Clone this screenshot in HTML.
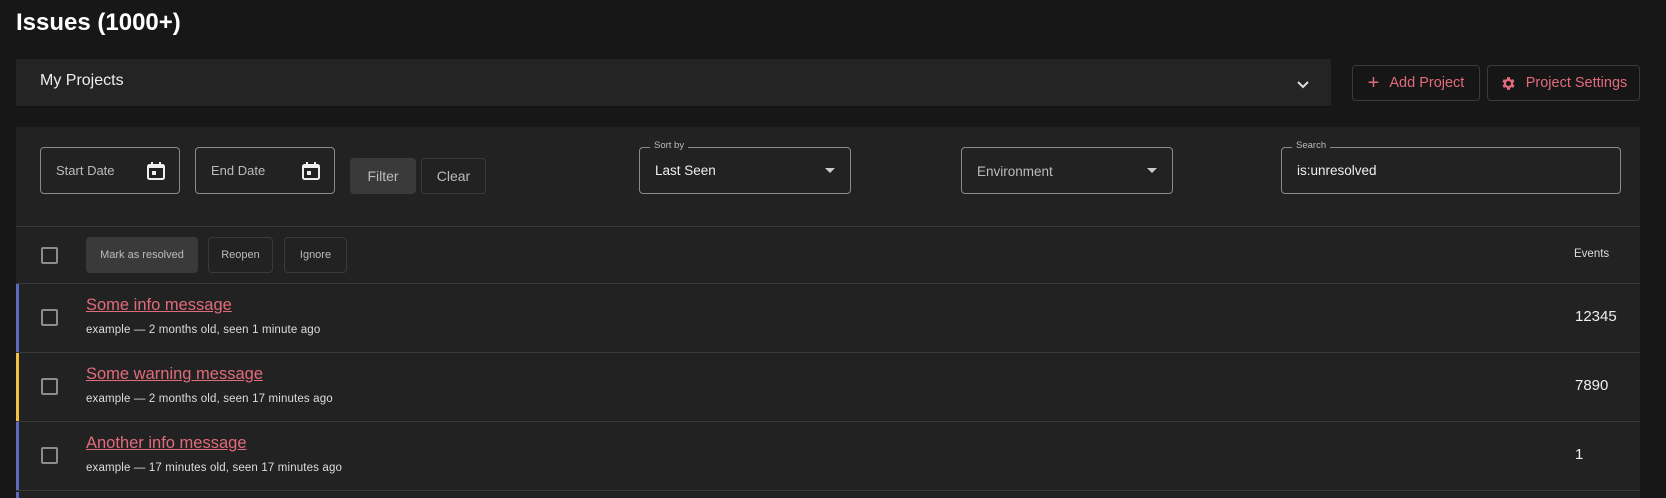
<!DOCTYPE html>
<html style="width:1666px;height:498px;overflow:hidden"><head><meta charset="utf-8"><style>
*{box-sizing:border-box;margin:0;padding:0}
body{width:1666px;height:498px;background:#171717;font-family:"Liberation Sans",sans-serif;color:#e8e8e8;position:relative;overflow:hidden}
.a{position:absolute}
.fld{position:absolute;border:1px solid #8a8a8a;border-radius:4px}
.btn{position:absolute;border:1px solid #3a3a3a;border-radius:4px;display:flex;align-items:center;justify-content:center;color:#bbb}
.lbl{position:absolute;top:-8px;left:10px;background:#222;padding:0 4px;font-size:9.5px;color:#bbb}
.cb{position:absolute;left:41px;width:17px;height:17px;border:2px solid #8c8c8c;border-radius:2px}
.row{position:absolute;left:16px;width:1624px;height:69px;border-bottom:1px solid #3a3a3a;background:#222}
.bar{position:absolute;left:0;top:0;width:3px;height:100%}
.t{position:absolute;left:70px;top:12px;font-size:16.5px;color:#e06b7b;text-decoration:underline}
.s{position:absolute;left:70px;top:40px;font-size:11.5px;color:#ddd;letter-spacing:0.15px}
.n{position:absolute;left:1559px;top:24px;font-size:15px;color:#eee}
</style></head><body>
<div class="a" style="left:16px;top:9px;font-size:24px;font-weight:bold;color:#fff">Issues (1000+)</div>
<div class="a" style="left:16px;top:59px;width:1315px;height:48px;background:#242424;border-bottom:1px solid #111"></div>
<div class="a" style="left:40px;top:72px;font-size:16px;color:#eee">My Projects</div>
<svg class="a" style="left:1296px;top:80px" width="14" height="10" viewBox="0 0 14 10"><path d="M2 2l5 5 5-5" stroke="#ddd" stroke-width="2" fill="none"/></svg>
<div class="btn" style="left:1352px;top:65px;width:128px;height:36px;color:#e06b7b;font-size:14.5px;background:#161616"><span style="font-size:20px;margin-right:10px;font-weight:300">+</span>Add Project</div>
<div class="btn" style="left:1487px;top:65px;width:153px;height:36px;color:#e06b7b;font-size:14.5px;background:#161616"><svg width="17" height="17" viewBox="0 0 24 24" style="margin-right:9px"><path fill="#e06b7b" d="M19.4 13a7.5 7.5 0 0 0 0-2l2.1-1.6-2-3.5-2.5 1a7 7 0 0 0-1.7-1L15 3h-4l-.4 2.9a7 7 0 0 0-1.7 1l-2.5-1-2 3.5L6.6 11a7.5 7.5 0 0 0 0 2l-2.1 1.6 2 3.5 2.5-1a7 7 0 0 0 1.7 1L11 21h4l.4-2.9a7 7 0 0 0 1.7-1l2.5 1 2-3.5zM13 15.5a3.5 3.5 0 1 1 0-7 3.5 3.5 0 0 1 0 7z" transform="translate(-1 0)"/></svg>Project Settings</div>
<div class="a" style="left:16px;top:127px;width:1624px;height:371px;background:#222"></div>
<div class="fld" style="left:40px;top:147px;width:140px;height:47px"><span class="a" style="left:15px;top:15px;font-size:13px;color:#bbb">Start Date</span><svg class="a" style="left:105px;top:13px" width="20" height="20" viewBox="0 0 20 20"><rect x="2" y="4" width="16" height="14" rx="1.5" fill="none" stroke="#eee" stroke-width="2"/><rect x="2" y="4" width="16" height="3" fill="#eee"/><rect x="5" y="1" width="2" height="4" fill="#eee"/><rect x="13" y="1" width="2" height="4" fill="#eee"/><rect x="6" y="10" width="4" height="4" fill="#eee"/></svg></div>
<div class="fld" style="left:195px;top:147px;width:140px;height:47px"><span class="a" style="left:15px;top:15px;font-size:13px;color:#bbb">End Date</span><svg class="a" style="left:105px;top:13px" width="20" height="20" viewBox="0 0 20 20"><rect x="2" y="4" width="16" height="14" rx="1.5" fill="none" stroke="#eee" stroke-width="2"/><rect x="2" y="4" width="16" height="3" fill="#eee"/><rect x="5" y="1" width="2" height="4" fill="#eee"/><rect x="13" y="1" width="2" height="4" fill="#eee"/><rect x="6" y="10" width="4" height="4" fill="#eee"/></svg></div>
<div class="btn" style="left:350px;top:158px;width:66px;height:36px;background:#3a3a3a;border-color:#3a3a3a;font-size:14px">Filter</div>
<div class="btn" style="left:421px;top:158px;width:65px;height:36px;font-size:14px">Clear</div>
<div class="fld" style="left:639px;top:147px;width:212px;height:47px"><span class="lbl">Sort by</span><span class="a" style="left:15px;top:15px;font-size:13.5px;color:#eee">Last Seen</span><svg class="a" style="left:185px;top:20px" width="10" height="6"><path d="M0 0h10L5 5z" fill="#ccc"/></svg></div>
<div class="fld" style="left:961px;top:147px;width:212px;height:47px"><span class="a" style="left:15px;top:16px;font-size:13.5px;color:#bbb">Environment</span><svg class="a" style="left:185px;top:20px" width="10" height="6"><path d="M0 0h10L5 5z" fill="#ccc"/></svg></div>
<div class="fld" style="left:1281px;top:147px;width:340px;height:47px"><span class="lbl">Search</span><span class="a" style="left:15px;top:15px;font-size:13.5px;color:#eee">is:unresolved</span></div>
<div class="a" style="left:16px;top:226px;width:1624px;height:1px;background:#3a3a3a"></div>
<div class="cb" style="top:247px"></div>
<div class="btn" style="left:86px;top:237px;width:112px;height:36px;background:#3a3a3a;border-color:#3a3a3a;font-size:11px">Mark as resolved</div>
<div class="btn" style="left:208px;top:237px;width:65px;height:36px;font-size:11px">Reopen</div>
<div class="btn" style="left:284px;top:237px;width:63px;height:36px;font-size:11px">Ignore</div>
<div class="a" style="left:1574px;top:248px;font-size:11.5px;color:#ddd">Events</div>
<div class="a" style="left:16px;top:283px;width:1624px;height:1px;background:#3a3a3a"></div>
<div class="row" style="top:284px"><div class="bar" style="background:#5c6bc0"></div><div class="cb" style="left:25px;top:25px"></div><div class="t">Some info message</div><div class="s">example — 2 months old, seen 1 minute ago</div><div class="n">12345</div></div>
<div class="row" style="top:353px"><div class="bar" style="background:#f0c040"></div><div class="cb" style="left:25px;top:25px"></div><div class="t">Some warning message</div><div class="s">example — 2 months old, seen 17 minutes ago</div><div class="n">7890</div></div>
<div class="row" style="top:422px"><div class="bar" style="background:#5c6bc0"></div><div class="cb" style="left:25px;top:25px"></div><div class="t">Another info message</div><div class="s">example — 17 minutes old, seen 17 minutes ago</div><div class="n">1</div></div>
<div class="row" style="top:492px;height:6px;border-bottom:0"><div class="bar" style="background:#5c6bc0"></div></div>
</body></html>
